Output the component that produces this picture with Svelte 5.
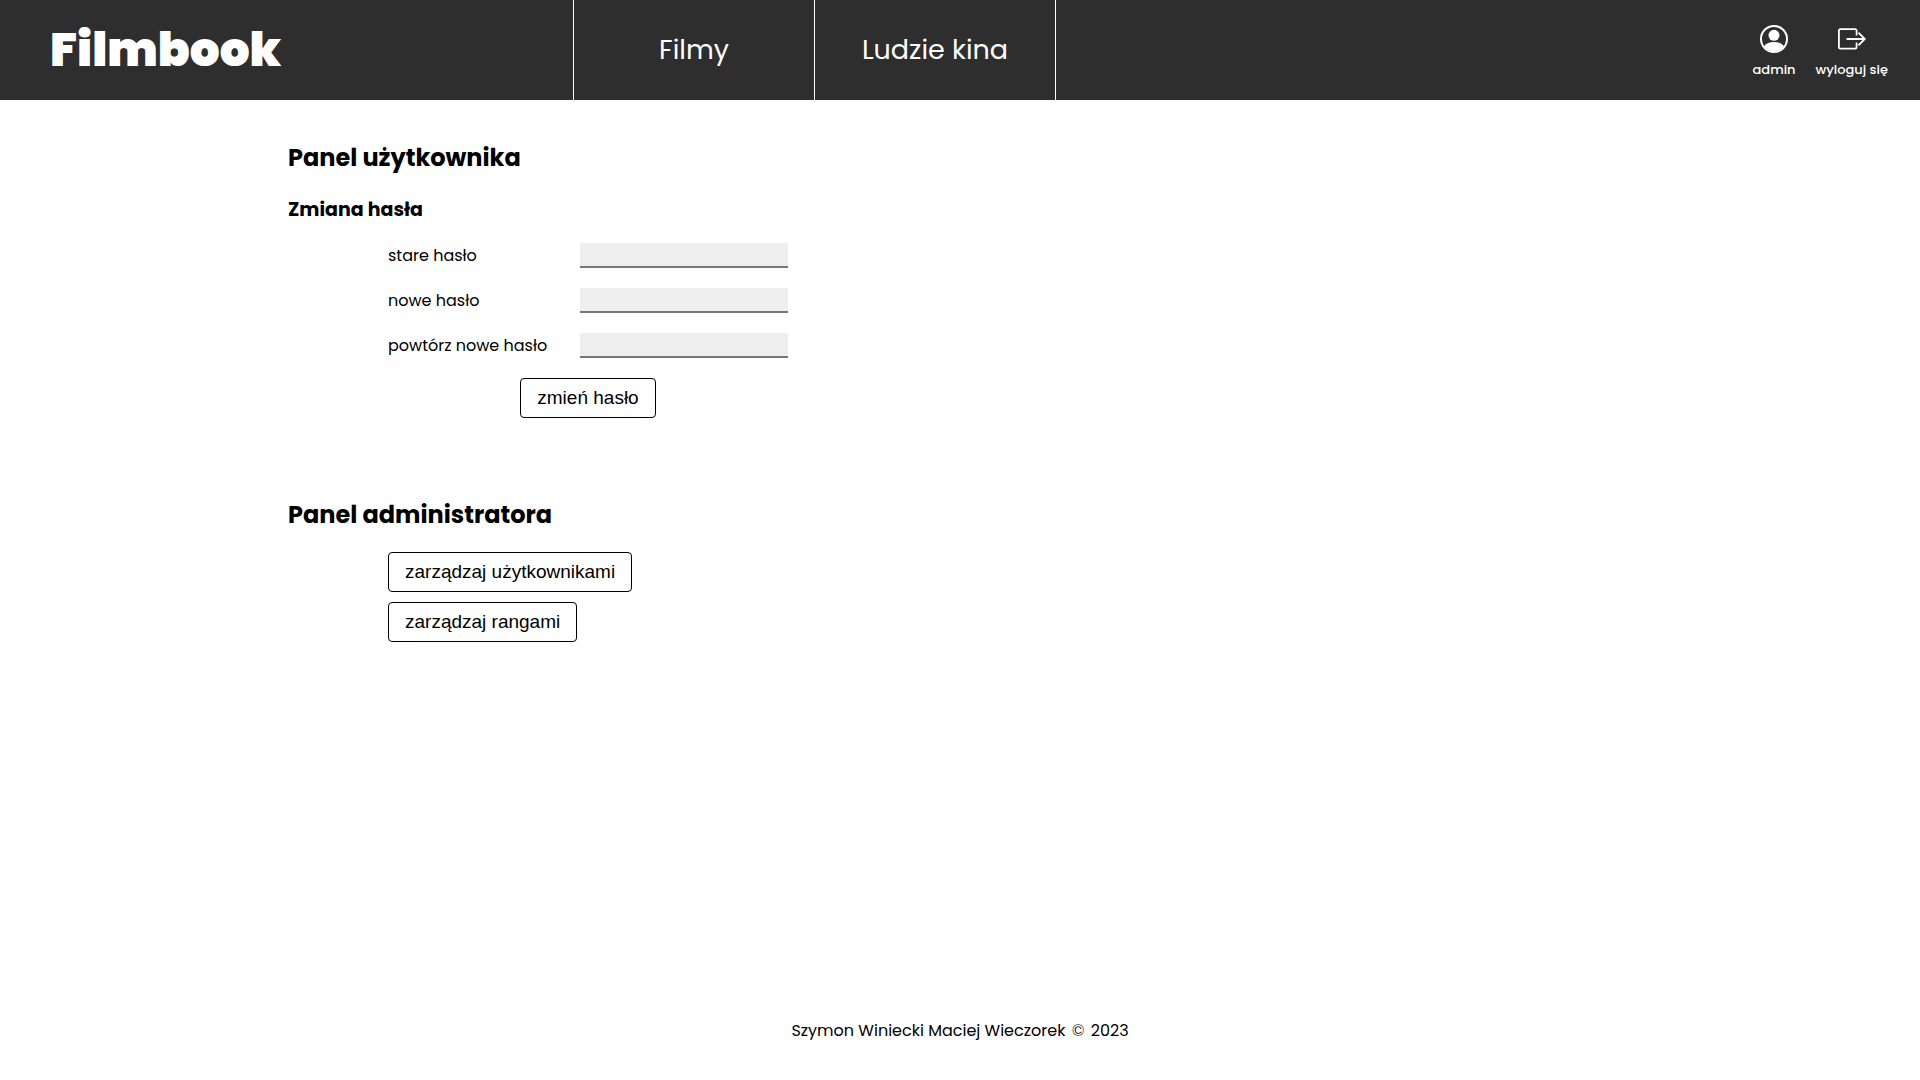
<script>
  const nav = ['Filmy', 'Ludzie kina'];
  const fields = [
    { id: 'old-password', label: 'stare hasło' },
    { id: 'new-password', label: 'nowe hasło' },
    { id: 'repeat-password', label: 'powtórz nowe hasło' }
  ];
  const adminActions = ['zarządzaj użytkownikami', 'zarządzaj rangami'];
</script>

<div class="page">
  <header>
    <a class="logo" href="#home">Filmbook</a>
    <nav>
      {#each nav as item}
        <a href="#{item}">{item}</a>
      {/each}
    </nav>
    <div class="account">
      <a href="#account">
        <svg width="28" height="28" viewBox="0 0 28 28" aria-hidden="true">
          <circle cx="14" cy="14" r="13" fill="none" stroke="currentColor" stroke-width="2" />
          <circle cx="14" cy="10.3" r="5.5" fill="currentColor" />
          <path fill="currentColor" d="M4 21.5C5.5 18.6 9 17 14 17s8.500 1.600 10 4.500A13 13 0 0 1 4 21.500z" />
        </svg>
        <span>admin</span>
      </a>
      <a href="#logout">
        <svg width="28" height="28" viewBox="0 0 28 28" fill="none" stroke="currentColor" stroke-width="1.8" aria-hidden="true">
          <path d="M18.600 10.500V5.700a1.500 1.500 0 0 0-1.500-1.500H2.400A1.500 1.500 0 0 0 .9 5.700v16.500a1.500 1.500 0 0 0 1.500 1.500h14.700a1.500 1.500 0 0 0 1.500-1.500v-4.700" />
          <path d="M8.500 14h18M20.500 7.600l6.300 6.400-6.300 6.400" />
        </svg>
        <span>wyloguj się</span>
      </a>
    </div>
  </header>

  <main>
    <section>
      <h2>Panel użytkownika</h2>
      <h3>Zmiana hasła</h3>
      <form onsubmit={(e) => e.preventDefault()}>
        {#each fields as field}
          <div class="field">
            <label for={field.id}>{field.label}</label>
            <input id={field.id} type="password" />
          </div>
        {/each}
        <button type="submit">zmień hasło</button>
      </form>
    </section>

    <section>
      <h2>Panel administratora</h2>
      <div class="actions">
        {#each adminActions as action}
          <button type="button">{action}</button>
        {/each}
      </div>
    </section>
  </main>

  <footer>Szymon Winiecki Maciej Wieczorek <span class="copyright">©</span> 2023</footer>
</div>

<style>
  :global(body) {
    margin: 0;
    background: #fff;
  }
  .page {
    display: flex;
    flex-direction: column;
    min-height: 100vh;
    font-family: Poppins, Inter, sans-serif;
    font-size: 16px;
    line-height: 24px;
    color: #000;
  }
  header {
    display: grid;
    grid-template-columns: 573fr 483px 864fr;
    height: 100px;
    background: #2e2e2e;
  }
  header a {
    color: #fff;
    text-decoration: none;
  }
  .logo {
    align-self: center;
    padding-left: 50px;
    font-size: 47px;
    line-height: 72px;
    font-weight: 900;
  }
  nav {
    display: grid;
    grid-template-columns: 1fr 1fr;
    border-left: 1px solid #fff;
  }
  nav a {
    display: flex;
    align-items: center;
    justify-content: center;
    border-right: 1px solid #fff;
    font-size: 27px;
  }
  .account {
    display: flex;
    justify-content: flex-end;
    align-items: center;
    gap: 20px;
    padding: 4px 32px 0 0;
  }
  .account a {
    display: flex;
    flex-direction: column;
    align-items: center;
    gap: 7px;
    font-size: 13px;
    line-height: 20px;
    font-weight: 500;
  }
  main {
    flex: 1;
    padding: 40px 15% 0;
  }
  section {
    margin-bottom: 79px;
  }
  h2,
  h3 {
    margin: 0 0 19px;
    font-weight: 700;
  }
  h2 {
    font-size: 24px;
    line-height: 36px;
  }
  h3 {
    font-size: 19px;
    line-height: 29px;
  }
  form {
    display: flex;
    flex-direction: column;
    align-items: center;
    gap: 20px;
    width: 400px;
    margin-left: 100px;
  }
  .field {
    display: flex;
    align-items: center;
    justify-content: space-between;
    width: 100%;
  }
  input {
    box-sizing: border-box;
    width: 208px;
    height: 25px;
    border: 0;
    border-bottom: 2px solid #767676;
    background: #eee;
  }
  button {
    height: 40px;
    padding: 0 16px;
    border: 1px solid #000;
    border-radius: 4px;
    background: #fff;
    color: #000;
    font: 19px "Liberation Sans", Arial, sans-serif;
  }
  .actions {
    display: flex;
    flex-direction: column;
    align-items: flex-start;
    gap: 10px;
    margin-left: 100px;
  }
  footer {
    padding-bottom: 37px;
    text-align: center;
  }
  .copyright {
    padding: 0 2px;
    font-weight: 300;
  }
</style>
